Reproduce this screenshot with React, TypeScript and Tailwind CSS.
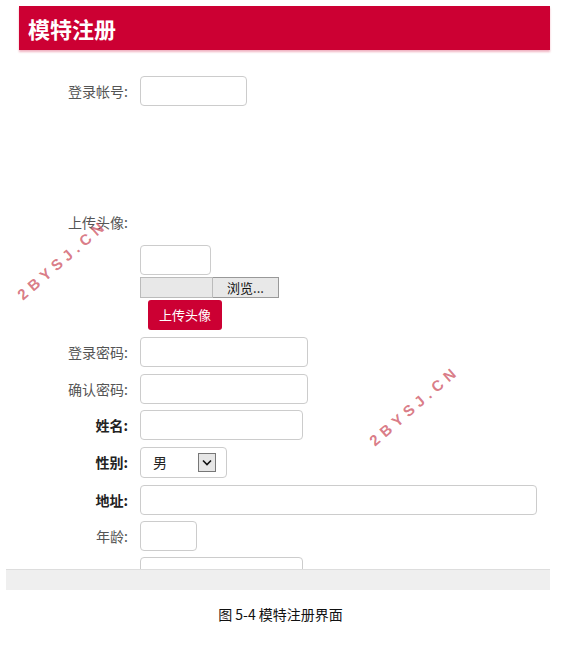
import React from 'react';

const cjk = { fontFamily: '"Noto Sans CJK SC", "Noto Sans", sans-serif' };

function Label({ text, strong }: { text: string; strong?: boolean }) {
  return (
    <div
      className={`w-[130px] shrink-0 pr-[2px] text-right text-[14px] ${strong ? 'font-semibold text-[#222]' : 'text-[#555]'}`}
    >
      {text}
    </div>
  );
}

function Field({ label, width, strong, mt }: { label: string; width: string; strong?: boolean; mt: string }) {
  return (
    <div className={`flex items-center ${mt}`}>
      <Label text={label} strong={strong} />
      <div className={`ml-[10px] h-[30px] ${width} rounded-[4px] border border-[#ccc] bg-white`} />
    </div>
  );
}

function Watermark({ className }: { className: string }) {
  return (
    <div
      className={`pointer-events-none absolute origin-left -rotate-[41deg] text-[15px] font-semibold tracking-[5px] text-[#d05a68]/80 ${className}`}
      style={{ fontFamily: '"Liberation Sans", sans-serif' }}
    >
      2BYSJ.CN
    </div>
  );
}

export default function App() {
  return (
    <div className="relative h-[672px] w-[561px] overflow-hidden bg-white" style={cjk}>
      <div className="pt-[6px]">
        <div className="ml-[19px] flex h-[44px] w-[531px] items-center bg-[#cc0033] pl-[9px] shadow-[0_2px_2px_rgba(204,0,51,0.3)]">
          <span className="text-[22px] font-bold text-white">模特注册</span>
        </div>
      </div>

      <div className="h-[519px] overflow-hidden">
        <Field label="登录帐号:" width="w-[107px]" mt="mt-[26px]" />

        <div className="mt-[106px] flex items-center">
          <Label text="上传头像:" />
        </div>
        <div className="ml-[140px] mt-[12px] h-[30px] w-[71px] rounded-[4px] border border-[#ccc] bg-white" />
        <div className="ml-[140px] mt-[2px] flex h-[21px]">
          <div className="w-[73px] border border-[#bbb] bg-[#e8e8e8]" />
          <div className="flex w-[66px] items-center justify-center border border-l-0 border-[#999] bg-[#e8e8e8] text-[13px] text-[#111]">
            浏览...
          </div>
        </div>
        <div className="ml-[148px] mt-[2px] flex h-[30px] w-[74px] items-center justify-center rounded-[3px] bg-[#cc0033] text-[13px] text-white">
          上传头像
        </div>

        <Field label="登录密码:" width="w-[168px]" mt="mt-[7px]" />
        <Field label="确认密码:" width="w-[168px]" mt="mt-[7px]" />
        <Field label="姓名:" width="w-[163px]" strong mt="mt-[6px]" />
        <div className="mt-[7px] flex items-center">
          <Label text="性别:" strong />
          <div className="ml-[10px] flex h-[31px] w-[87px] items-center rounded-[4px] border border-[#ccc] bg-white pl-[12px]">
            <span className="text-[14px] text-[#222]">男</span>
            <div className="ml-auto mr-[10px] flex h-[19px] w-[18px] items-center justify-center border border-[#777] bg-[#e6e6e6]">
              <svg width="10" height="7" viewBox="0 0 10 7">
                <path d="M1 1.5 L5 5.5 L9 1.5" fill="none" stroke="#111" strokeWidth="1.6" />
              </svg>
            </div>
          </div>
        </div>
        <Field label="地址:" width="w-[397px]" strong mt="mt-[7px]" />
        <Field label="年龄:" width="w-[57px]" mt="mt-[6px]" />
        <div className="ml-[140px] mt-[6px] h-[30px] w-[163px] rounded-[4px] border border-[#ccc] bg-white" />
      </div>

      <div className="ml-[6px] h-[21px] w-[544px] border-t border-[#ddd] bg-[#efefef]" />

      <div className="mt-[14px] text-center text-[14px] text-[#111]" style={{ fontFamily: '"Noto Sans CJK SC", sans-serif' }}>
        图 5-4 模特注册界面
      </div>

      <Watermark className="left-[20px] top-[286px]" />
      <Watermark className="left-[372px] top-[432px]" />
    </div>
  );
}
